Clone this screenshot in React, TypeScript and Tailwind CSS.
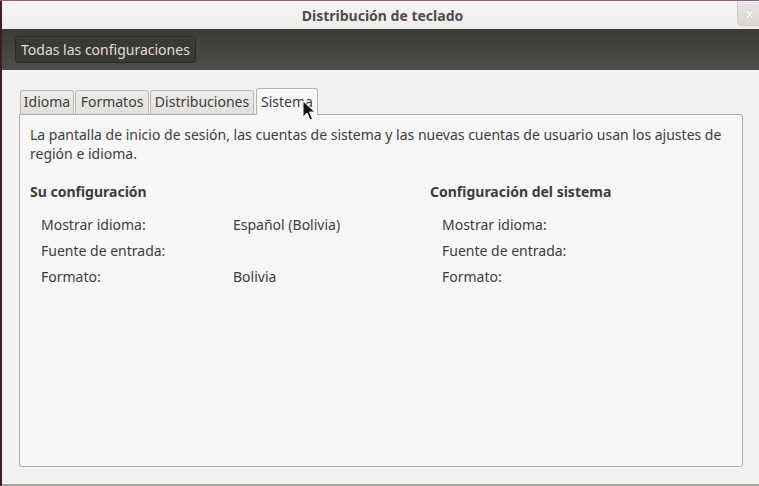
import React from 'react';

const tabs = [
  { name: 'Idioma', w: 'w-[54px]' },
  { name: 'Formatos', w: 'w-[74px]' },
  { name: 'Distribuciones', w: 'w-[104px]' },
  { name: 'Sistema', w: 'w-[62px]' },
];

const userRows = [
  { label: 'Mostrar idioma:', value: 'Español (Bolivia)' },
  { label: 'Fuente de entrada:', value: '' },
  { label: 'Formato:', value: 'Bolivia' },
];

const systemRows = ['Mostrar idioma:', 'Fuente de entrada:', 'Formato:'];

function Cursor() {
  return (
    <svg className="absolute z-30 left-[302px] top-[100px]" width="14" height="22" viewBox="0 0 14 22">
      <path
        d="M1 1 L1 17 L5 13 L8 20 L10.5 19 L7.5 12 L13 12 Z"
        fill="#111"
        stroke="#fff"
        strokeWidth="1"
        strokeLinejoin="round"
      />
    </svg>
  );
}

export default function App() {
  return (
    <div
      className="relative w-[759px] h-[486px] overflow-hidden bg-[#f2f1f0] text-[#3c3c3c]"
      style={{ fontFamily: '"Noto Sans", "DejaVu Sans", sans-serif' }}
    >
      <div className="h-px bg-[#9a5a7c]" />
      <div className="flex h-[calc(100%-1px)]">
        <div className="w-[2px] bg-[#3a1e2b]" />
        <div className="flex-1 flex flex-col border-b-2 border-[#a9a7a3]">
          {/* Title bar */}
          <div className="relative h-[28px] flex items-center justify-center bg-gradient-to-b from-[#f6f5f4] to-[#eeedeb]">
            <span className="text-[14px] font-bold text-[#4c4c4c] ml-[4px]">Distribución de teclado</span>
            <div className="absolute right-[-2px] top-[1px] w-[24px] h-[24px] rounded-bl-[5px] border-l border-b border-[#cfccc7] bg-gradient-to-b from-[#e9e7e4] to-[#d8d5d0] flex items-center justify-center">
              <span className="text-[13px] font-bold text-white leading-none [text-shadow:0_0_1px_#8a8680]">x</span>
            </div>
          </div>

          {/* Toolbar */}
          <div className="h-[41px] flex items-center px-[13px] bg-gradient-to-b from-[#3b3a36] to-[#504e49]">
            <button className="h-[27px] px-[5px] rounded-[3px] border border-[#2b2a27] bg-[#3a3935] text-[14px] text-[#e0ddd6] shadow-[inset_0_1px_0_rgba(255,255,255,0.06)]">
              Todas las configuraciones
            </button>
          </div>

          {/* Body */}
          <div className="flex-1 pl-[17px] pr-[16px] pt-[18px] pb-[17px] flex flex-col">
            <div className="flex items-end pl-px h-[26px] gap-px">
              {tabs.map((t) =>
                t.name === 'Sistema' ? (
                  <div
                    key={t.name}
                    className={`${t.w} relative z-10 h-[27px] -mb-px ml-px pt-[2px] text-center rounded-t-[3px] border border-b-0 border-[#b6b3ae] bg-[#f7f7f7] text-[14px] leading-[22px]`}
                  >
                    {t.name}
                  </div>
                ) : (
                  <div
                    key={t.name}
                    className={`${t.w} h-[24px] text-center rounded-t-[3px] border border-b-0 border-[#bdbab5] bg-gradient-to-b from-[#eeecea] to-[#e2e0dc] text-[14px] leading-[22px]`}
                  >
                    {t.name}
                  </div>
                )
              )}
            </div>
            <div className="flex-1 rounded-b-[3px] rounded-tr-[3px] border border-[#b0aeaa] bg-[#f7f7f7] pl-[10px] pt-[10px]">
              <p className="text-[14px] leading-[19px]">
                La pantalla de inicio de sesión, las cuentas de sistema y las nuevas cuentas de usuario usan los ajustes de
                <br />
                región e idioma.
              </p>
              <div className="flex mt-[19px]">
                <div className="w-[400px]">
                  <div className="text-[14px] font-bold leading-[20px]">Su configuración</div>
                  <div className="mt-[13px] pl-[11px] flex flex-col gap-[6px]">
                    {userRows.map((r) => (
                      <div key={r.label} className="flex text-[14px] leading-[20px]">
                        <span className="w-[192px]">{r.label}</span>
                        <span>{r.value}</span>
                      </div>
                    ))}
                  </div>
                </div>
                <div>
                  <div className="text-[14px] font-bold leading-[20px]">Configuración del sistema</div>
                  <div className="mt-[13px] pl-[12px] flex flex-col gap-[6px]">
                    {systemRows.map((l) => (
                      <div key={l} className="text-[14px] leading-[20px]">
                        {l}
                      </div>
                    ))}
                  </div>
                </div>
              </div>
            </div>
          </div>
        </div>
      </div>
      <Cursor />
    </div>
  );
}
